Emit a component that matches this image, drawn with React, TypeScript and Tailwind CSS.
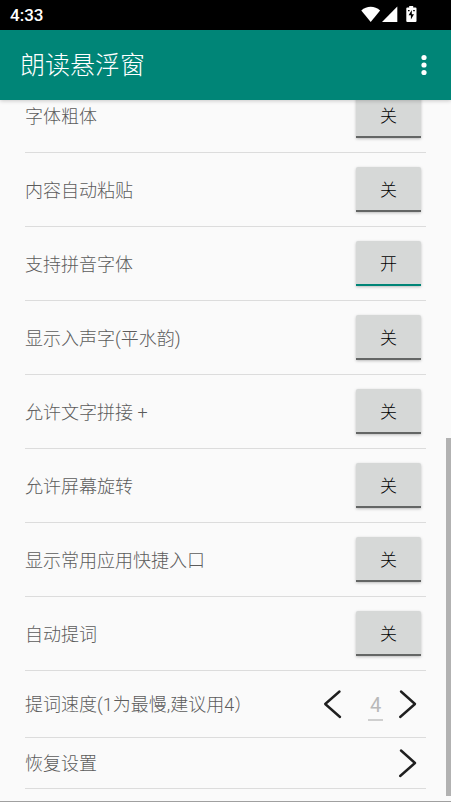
import { useState } from "react";

interface ToggleSetting {
  id: string;
  label: string;
  on: boolean;
}

const INITIAL_SETTINGS: ToggleSetting[] = [
  { id: "bold", label: "字体粗体", on: false },
  { id: "paste", label: "内容自动粘贴", on: false },
  { id: "pinyin", label: "支持拼音字体", on: true },
  { id: "rusheng", label: "显示入声字(平水韵)", on: false },
  { id: "concat", label: "允许文字拼接 +", on: false },
  { id: "rotate", label: "允许屏幕旋转", on: false },
  { id: "shortcuts", label: "显示常用应用快捷入口", on: false },
  { id: "prompter", label: "自动提词", on: false },
];

function StatusBar() {
  return (
    <div className="flex h-[30px] items-center justify-between bg-black pl-[10px] pr-[34px] text-white">
      <span className="text-[17px] leading-5 font-medium">4:33</span>
      <div className="flex items-center pb-0.5">
        <svg width="20" height="16" viewBox="0 0 20 16" fill="currentColor" aria-hidden="true">
          <path d="M0.3 4.4C3 2 6.300 0.700 9.700 0.700S16.400 2 19.100 4.400L9.700 16Z" />
        </svg>
        <svg className="ml-px" width="16" height="16" viewBox="0 0 16 16" fill="currentColor" aria-hidden="true">
          <path d="M15.300 0.500V16H0Z" />
        </svg>
        <svg className="ml-2" width="11" height="18" viewBox="0 0 11 18" aria-hidden="true">
          <path
            fill="currentColor"
            d="M3.200 1h4v1.500H9.500a1 1 0 0 1 1 1V16a1 1 0 0 1-1 1H1.300a1 1 0 0 1-1-1V3.500a1 1 0 0 1 1-1H3.200Z"
          />
          <path fill="#000" d="M5.800 5 2.600 10.300H4.900V14.500L8 9.200H5.800Z" />
          <path fill="#000" d="M2 5h1.600v1.200H2zM7.200 5h1.600v1.200H7.200z" />
        </svg>
      </div>
    </div>
  );
}

function AppBar() {
  return (
    <header className="relative z-10 flex h-[70px] items-center justify-between bg-[#008577] pl-5 pr-[15px] text-white shadow-[0_1px_4px_rgba(0,0,0,0.2)]">
      <h1 className="pt-0.5 text-[25px] leading-8 font-light">朗读悬浮窗</h1>
      <button type="button" aria-label="更多选项" className="flex h-10 w-6 items-center justify-center">
        <svg width="6" height="22" viewBox="0 0 6 22" fill="currentColor" aria-hidden="true">
          <circle cx="3" cy="3.500" r="2.600" />
          <circle cx="3" cy="11" r="2.600" />
          <circle cx="3" cy="18.500" r="2.600" />
        </svg>
      </button>
    </header>
  );
}

function Chevron({ direction }: { direction: "left" | "right" }) {
  return (
    <svg
      width="20"
      height="30"
      viewBox="0 0 20 30"
      fill="none"
      stroke="#1f1f1f"
      strokeWidth="2.400"
      strokeLinecap="round"
      strokeLinejoin="round"
      aria-hidden="true"
    >
      <path d={direction === "left" ? "M16.500 2.500 2.200 15 17 28" : "M3 2.500 17 15 2.200 28"} />
    </svg>
  );
}

function ToggleRow({ setting, onToggle }: { setting: ToggleSetting; onToggle: () => void }) {
  return (
    <li className="flex h-[74px] items-center justify-between border-b border-[#dcdcdc] pr-[5px]">
      <span id={setting.id} className="pt-0.5">
        {setting.label}
      </span>
      <button
        type="button"
        aria-pressed={setting.on}
        aria-labelledby={setting.id}
        onClick={onToggle}
        className={`h-[45px] w-[65px] rounded-t-[2px] border-b-2 bg-[#d6d8d7] pt-0.5 text-[17px] leading-6 text-black shadow-[0_1px_3px_rgba(0,0,0,0.25)] ${
          setting.on ? "border-[#008577]" : "border-[#646665]"
        }`}
      >
        {setting.on ? "开" : "关"}
      </button>
    </li>
  );
}

export default function App() {
  const [settings, setSettings] = useState(INITIAL_SETTINGS);
  const [speed, setSpeed] = useState(4);

  const toggle = (id: string) => {
    setSettings((prev) => prev.map((s) => (s.id === id ? { ...s, on: !s.on } : s)));
  };

  return (
    <div className="flex min-h-screen flex-col bg-[#fafafa] font-[Roboto,'Noto_Sans_CJK_SC',sans-serif]">
      <StatusBar />
      <AppBar />

      <main className="relative flex-1 overflow-hidden border-b border-[#a0a0a0] pb-3 pl-[25px] pr-[25px] text-[18px] leading-6 font-light text-[#5c5c5c]">
        {/* List is scrolled to the end, so the first row sits partly under the app bar */}
        <ul className="-mt-[21px]">
          {settings.map((s) => (
            <ToggleRow key={s.id} setting={s} onToggle={() => toggle(s.id)} />
          ))}

          <li className="flex h-[67px] items-center justify-between border-b border-[#dcdcdc] pr-2">
            <label htmlFor="speed" className="pt-0.5">
              提词速度(1为最慢,建议用4）
            </label>
            <div className="flex items-center">
              <button type="button" aria-label="减慢" onClick={() => setSpeed((v) => Math.max(1, v - 1))}>
                <Chevron direction="left" />
              </button>
              <input
                id="speed"
                value={speed}
                readOnly
                className="mr-[15px] ml-[25px] mt-1 h-[30px] w-[15px] border-b-2 border-[#cfcfcf] text-center text-[20px] leading-6 font-normal text-[#b9b9b9] outline-none"
              />
              <button type="button" aria-label="加快" onClick={() => setSpeed((v) => Math.min(9, v + 1))}>
                <Chevron direction="right" />
              </button>
            </div>
          </li>

          <li className="flex h-[51px] items-center justify-between border-b border-[#dcdcdc] pr-2">
            <span id="restore" className="pt-0.5">
              恢复设置
            </span>
            <button type="button" aria-labelledby="restore">
              <Chevron direction="right" />
            </button>
          </li>
        </ul>

        {/* Scroll thumb */}
        <div className="absolute right-0 top-[338px] bottom-[5px] w-[5px] bg-[#b2b2b2]" />
      </main>
    </div>
  );
}
